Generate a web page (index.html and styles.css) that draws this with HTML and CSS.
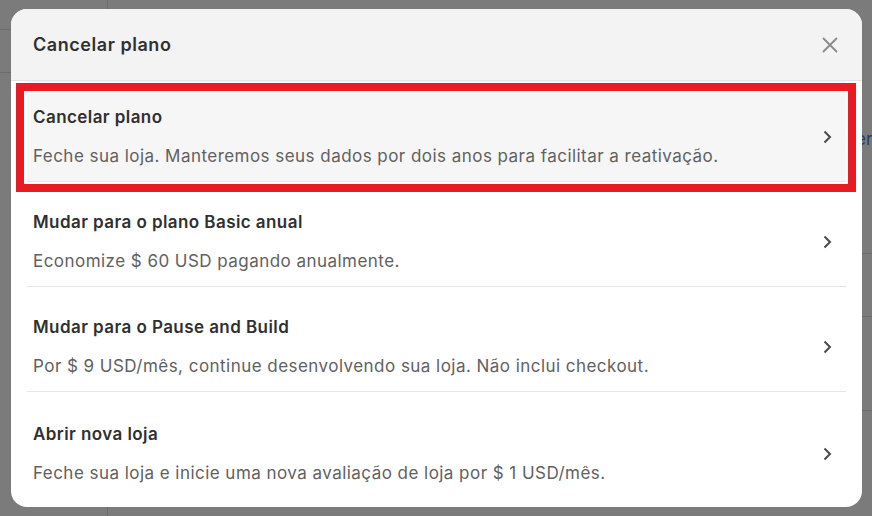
FILE: index.html
```html
<!DOCTYPE html>
<html lang="pt-BR">
<head>
  <meta charset="UTF-8" />
  <title>Cancelar plano</title>
  <link rel="stylesheet" href="styles.css">
</head>
<body>

<!-- pagina por tras do overlay -->
<div class="backdrop">
  <div class="bg-line h1"></div>
  <div class="bg-line h2"></div>
  <div class="bg-line h3"></div>
  <div class="bg-line h4"></div>
  <div class="bg-line h5"></div>
  <div class="bg-line v1"></div>
  <div class="bg-line v2"></div>
  <span class="bg-text">er</span>
</div>

<div class="modal">
  <div class="modal-header">
    <h2>Cancelar plano</h2>
    <button class="close" aria-label="Fechar">
      <svg width="16" height="16" viewBox="0 0 16 16"><path d="M1.5 1.5l13 13M14.5 1.5l-13 13" stroke="#8a8a8a" stroke-width="1.8" stroke-linecap="round" fill="none"/></svg>
    </button>
  </div>

  <ul class="options">
    <li class="option active">
      <div class="option-text">
        <div class="option-title">Cancelar plano</div>
        <div class="option-desc">Feche sua loja. Manteremos seus dados por dois anos para facilitar a reativação.</div>
      </div>
      <svg class="chevron" width="10" height="14" viewBox="0 0 10 14"><path d="M2.5 1.5l5.5 5.5-5.5 5.5" stroke="#4a4a4a" stroke-width="2" fill="none"/></svg>
    </li>
    <li class="option">
      <div class="option-text">
        <div class="option-title">Mudar para o plano Basic anual</div>
        <div class="option-desc">Economize $ 60 USD pagando anualmente.</div>
      </div>
      <svg class="chevron" width="10" height="14" viewBox="0 0 10 14"><path d="M2.5 1.5l5.5 5.5-5.5 5.5" stroke="#4a4a4a" stroke-width="2" fill="none"/></svg>
    </li>
    <li class="option">
      <div class="option-text">
        <div class="option-title">Mudar para o Pause and Build</div>
        <div class="option-desc">Por $ 9 USD/mês, continue desenvolvendo sua loja. Não inclui checkout.</div>
      </div>
      <svg class="chevron" width="10" height="14" viewBox="0 0 10 14"><path d="M2.5 1.5l5.5 5.5-5.5 5.5" stroke="#4a4a4a" stroke-width="2" fill="none"/></svg>
    </li>
    <li class="option">
      <div class="option-text">
        <div class="option-title">Abrir nova loja</div>
        <div class="option-desc">Feche sua loja e inicie uma nova avaliação de loja por $ 1 USD/mês.</div>
      </div>
      <svg class="chevron" width="10" height="14" viewBox="0 0 10 14"><path d="M2.5 1.5l5.5 5.5-5.5 5.5" stroke="#4a4a4a" stroke-width="2" fill="none"/></svg>
    </li>
  </ul>
</div>

<!-- marcacao vermelha -->
<div class="highlight"></div>

</body>
</html>
```

FILE: styles.css
```css
body {
  margin: 0;
  padding: 9px 10px 9px 11px;
  width: 872px;
  height: 516px;
  box-sizing: border-box;
  background: #7b7b7b;
  font-family: Inter, "Noto Sans", sans-serif;
  overflow: hidden;
  position: relative;
}

.backdrop {
  position: absolute;
  inset: 0;
  z-index: 0;
}

.bg-line {
  position: absolute;
  background: #6c6c6c;
}

.h1 { left: 0; top: 29px; width: 40px; height: 1px; }
.h2 { left: 0; top: 72px; width: 20px; height: 1px; }
.h3 { left: 850px; top: 253px; width: 30px; height: 1px; }
.h4 { left: 850px; top: 316px; width: 30px; height: 1px; }
.h5 { left: 850px; top: 410px; width: 30px; height: 1px; }
.v1 { left: 107px; top: 0; width: 1px; height: 20px; }
.v2 { left: 107px; top: 500px; width: 1px; height: 20px; }

.bg-text {
  position: absolute;
  left: 856px;
  top: 129px;
  font-size: 17px;
  color: #1e3e6e;
}

.modal {
  position: relative;
  z-index: 1;
  width: 851px;
  height: 498px;
  background: #fff;
  border-radius: 16px;
  overflow: hidden;
}

.modal-header {
  display: flex;
  align-items: center;
  justify-content: space-between;
  height: 71px;
  padding: 0 24px 0 22px;
  background: #f3f3f3;
  border-bottom: 1px solid #e3e3e3;
}

.modal-header h2 {
  margin: 0;
  font-size: 18px;
  font-weight: 600;
  color: #303030;
  letter-spacing: 0.55px;
}

.close {
  background: none;
  border: none;
  padding: 0;
  width: 16px;
  height: 16px;
  cursor: pointer;
}

.close svg {
  display: block;
}

.options {
  list-style: none;
  margin: 0;
  padding: 0 16px;
}

.option {
  display: flex;
  align-items: center;
  justify-content: space-between;
  padding: 28px 14px 13px 6px;
  border-bottom: 1px solid #e6e6e6;
  cursor: pointer;
}

.option:first-child {
  padding-top: 24px;
}

.option:last-child {
  border-bottom: none;
  padding-top: 30px;
}

.option.active {
  background: #f6f6f6;
}

.option-title {
  font-size: 17px;
  line-height: 24px;
  font-weight: 600;
  color: #303030;
  letter-spacing: 0.43px;
}

.option-desc {
  margin-top: 15px;
  font-size: 17px;
  line-height: 24px;
  color: #616161;
  letter-spacing: 0.46px;
}

.chevron {
  flex-shrink: 0;
}

.highlight {
  position: absolute;
  z-index: 2;
  left: 16px;
  top: 83px;
  width: 824px;
  height: 93px;
  border: 8px solid #e61b23;
  pointer-events: none;
}
```
